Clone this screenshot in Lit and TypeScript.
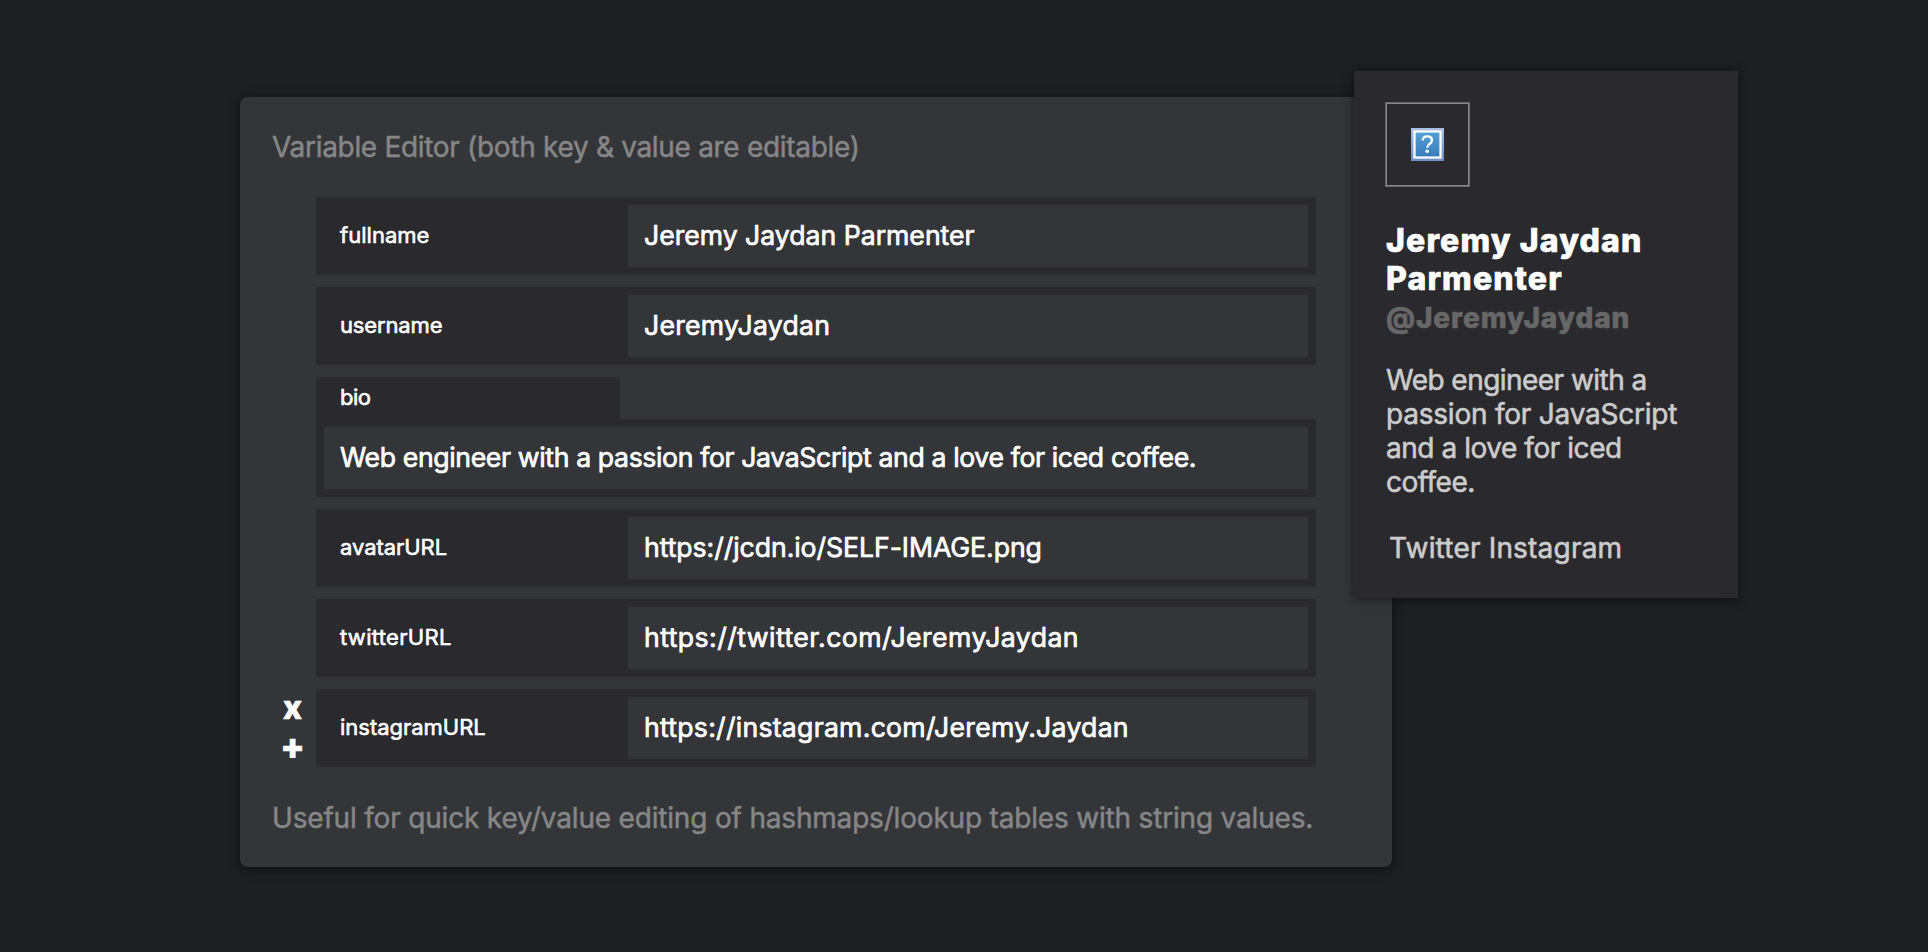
import { LitElement, html, css, nothing } from "lit";
import { styleMap } from "lit/directives/style-map.js";

interface Entry {
  key: string;
  keyTrack: number;
  value: string;
  valueTrack: number;
  long?: boolean;
  active?: boolean;
}

const entries: Entry[] = [
  { key: "fullname", keyTrack: 0.02, value: "Jeremy Jaydan Parmenter", valueTrack: -0.03 },
  { key: "username", keyTrack: -0.14, value: "JeremyJaydan", valueTrack: 0.22 },
  { key: "bio", keyTrack: -0.5, value: "Web engineer with a passion for JavaScript and a love for iced coffee.", valueTrack: -0.38, long: true },
  { key: "avatarURL", keyTrack: -0.05, value: "https://jcdn.io/SELF-IMAGE.png", valueTrack: -0.08 },
  { key: "twitterURL", keyTrack: 0.32, value: "https://twitter.com/JeremyJaydan", valueTrack: 0.43 },
  { key: "instagramURL", keyTrack: -0.02, value: "https://instagram.com/Jeremy.Jaydan", valueTrack: 0.24, active: true },
];

const track = (px: number) => styleMap({ letterSpacing: `${px}px` });

class VariableEditor extends LitElement {
  static styles = css`
    :host {
      display: flex;
      flex-direction: column;
      box-sizing: border-box;
      width: 1152px;
      height: 770px;
      padding: 33px 32px 32px;
      background: #343538;
      border-radius: 8px;
      box-shadow: 0 2px 12px rgba(0, 0, 0, 0.5);
      color: #fff;
    }
    .note {
      font-size: 28px;
      line-height: 34px;
      color: #868686;
      white-space: nowrap;
      -webkit-text-stroke: 0.5px;
    }
    .title { letter-spacing: -0.31px; }
    .footer { letter-spacing: -0.185px; margin-top: 34px; }
    .rows {
      display: flex;
      flex-direction: column;
      gap: 12px;
      margin-top: 33px;
    }
    .row { display: flex; }
    .actions {
      display: grid;
      grid-template-rows: 38px 37px;
      justify-items: center;
      align-items: center;
      box-sizing: border-box;
      width: 44px;
      height: 78px;
      padding-right: 3px;
      font: 800 32px/32px Inter, sans-serif;
      -webkit-text-stroke: 0.6px;
    }
    .plus { font-size: 36px; }
    .pair { display: flex; width: 1000px; }
    .pair.long { flex-direction: column; }
    .key {
      display: flex;
      align-items: center;
      box-sizing: border-box;
      width: 304px;
      height: 78px;
      padding: 0 0 3px 24px;
      background: #2a292d;
      font-size: 22px;
      -webkit-text-stroke: 0.6px;
    }
    .long .key { height: 42px; padding-bottom: 3px; }
    .value {
      box-sizing: border-box;
      flex: 1;
      padding: 8px;
      background: #2a292d;
      font-size: 26.67px;
      -webkit-text-stroke: 0.7px;
    }
    .long .value { flex: none; }
    .input {
      display: flex;
      align-items: center;
      box-sizing: border-box;
      height: 62px;
      padding: 0 0 3px 16px;
      background: #343538;
      white-space: nowrap;
    }
  `;
  render() {
    return html`
      <div class="note title">Variable Editor (both key &amp; value are editable)</div>
      <div class="rows">
        ${entries.map(
          (e) => html`<div class="row">
            <div class="actions">
              ${e.active ? html`<span>x</span><span class="plus">+</span>` : nothing}
            </div>
            <div class="pair ${e.long ? "long" : ""}">
              <div class="key" style=${track(e.keyTrack)}>${e.key}</div>
              <div class="value"><div class="input" style=${track(e.valueTrack)}>${e.value}</div></div>
            </div>
          </div>`
        )}
      </div>
      <div class="note footer">Useful for quick key/value editing of hashmaps/lookup tables with string values.</div>
    `;
  }
}
customElements.define("variable-editor", VariableEditor);

class ProfileCard extends LitElement {
  static styles = css`
    :host {
      display: block;
      box-sizing: border-box;
      width: 384px;
      height: 527px;
      padding: 31px;
      background: #2a292d;
      box-shadow: 0 1px 10px rgba(0, 0, 0, 0.55);
      color: #ccc;
      font-size: 28px;
      line-height: 34px;
      white-space: nowrap;
      -webkit-text-stroke: 0.6px;
    }
    .avatar {
      display: flex;
      align-items: center;
      justify-content: center;
      box-sizing: border-box;
      width: 85px;
      height: 85px;
      border: 1px solid #69696b;
      box-shadow: inset 0 0 0 1px #858586;
    }
    svg { display: block; }
    .name {
      margin: 35px 0 0 1px;
      font: 800 32px/38px Inter, sans-serif;
      letter-spacing: 1.15px;
      color: #fff;
    }
    .handle {
      margin: 3px 0 0 1px;
      font: 800 28px/34px Inter, sans-serif;
      letter-spacing: 0.9px;
      color: #676767;
    }
    .bio { margin: 28px 0 0 1px; }
    .bio div:nth-child(1) { letter-spacing: -0.54px; }
    .bio div:nth-child(2) { letter-spacing: -0.22px; }
    .bio div:nth-child(3) { letter-spacing: -0.45px; }
    .bio div:nth-child(4) { letter-spacing: -0.5px; }
    .links { display: flex; gap: 8px; margin: 32px 0 0 4px; letter-spacing: 0.2px; }
  `;
  render() {
    return html`
      <div class="avatar">
        <svg width="33" height="33" viewBox="0 0 33 33">
          <defs>
            <linearGradient id="b" x1="0" y1="0" x2="0" y2="1">
              <stop offset="0" stop-color="#539fd3" />
              <stop offset="1" stop-color="#3b7dbd" />
            </linearGradient>
            <linearGradient id="o" x1="0" y1="0" x2="0" y2="1">
              <stop offset="0" stop-color="#a9bfe2" />
              <stop offset="1" stop-color="#6f90c4" />
            </linearGradient>
          </defs>
          <rect width="33" height="33" fill="url(#o)" />
          <rect x="2.4" y="2.4" width="28.2" height="28.2" fill="#fff" />
          <rect x="4.6" y="4.6" width="23.8" height="23.8" fill="url(#b)" />
          <path d="M11.7 12.4C11.8 9.8 13.7 8.4 16.3 8.4C19 8.4 20.9 9.9 20.9 12.2C20.9 14 20 14.9 18.6 15.9C17 17 16.3 17.8 16.3 19.8" fill="none" stroke="#fff" stroke-width="2.4" />
          <circle cx="16.2" cy="23.2" r="1.8" fill="#fff" />
        </svg>
      </div>
      <div class="name">Jeremy Jaydan<br />Parmenter</div>
      <div class="handle">@JeremyJaydan</div>
      <div class="bio">
        <div>Web engineer with a</div>
        <div>passion for JavaScript</div>
        <div>and a love for iced</div>
        <div>coffee.</div>
      </div>
      <div class="links"><span>Twitter</span><span>Instagram</span></div>
    `;
  }
}
customElements.define("profile-card", ProfileCard);

class AppRoot extends LitElement {
  static styles = css`
    :host {
      display: block;
      position: relative;
      box-sizing: border-box;
      width: 1928px;
      height: 952px;
      padding: 97px 0 0 240px;
      overflow: hidden;
      background: #1e1f23;
      font-family: Inter, sans-serif;
    }
    profile-card {
      position: absolute;
      left: 1354px;
      top: 71px;
    }
  `;
  render() {
    return html`<variable-editor></variable-editor><profile-card></profile-card>`;
  }
}
customElements.define("app-root", AppRoot);
